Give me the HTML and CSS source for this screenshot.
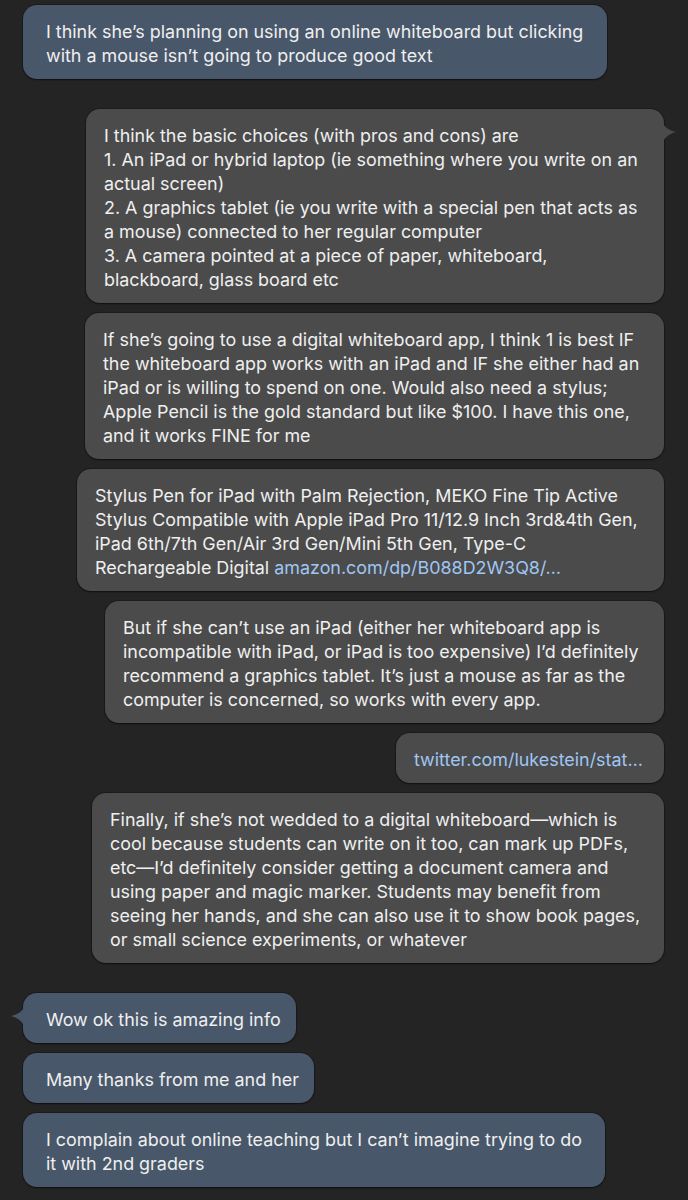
FILE: index.html
```html
<!DOCTYPE html>
<html lang="en">
<head>
<meta charset="utf-8">
<title>Messages</title>
<link rel="stylesheet" href="styles.css">
</head>
<body>
<main class="thread">
  <div class="bubble in w1 first">I think she’s planning on using an online whiteboard but clicking<br>with a mouse isn’t going to produce good text</div>

  <div class="group">
    <div class="bubble out w2 tailed">I think the basic choices (with pros and cons) are<br>1. An iPad or hybrid laptop (ie something where you write on an<br>actual screen)<br>2. A graphics tablet (ie you write with a special pen that acts as<br>a mouse) connected to her regular computer<br>3. A camera pointed at a piece of paper, whiteboard,<br>blackboard, glass board etc<svg class="tail tail-right" width="16" height="26" viewBox="0 0 16 26"><path d="M0 0 C2 6 6 9 14 11 C6 13 2 17 0 24 Z"/></svg></div>
    <div class="bubble out w3">If she’s going to use a digital whiteboard app, I think 1 is best IF<br>the whiteboard app works with an iPad and IF she either had an<br>iPad or is willing to spend on one. Would also need a stylus;<br>Apple Pencil is the gold standard but like $100. I have this one,<br>and it works FINE for me</div>
    <div class="bubble out w4">Stylus Pen for iPad with Palm Rejection, MEKO Fine Tip Active<br>Stylus Compatible with Apple iPad Pro 11/12.9 Inch 3rd&amp;4th Gen,<br>iPad 6th/7th Gen/Air 3rd Gen/Mini 5th Gen, Type-C<br>Rechargeable Digital <span class="link">amazon.com/dp/B088D2W3Q8/…</span></div>
    <div class="bubble out w5">But if she can’t use an iPad (either her whiteboard app is<br>incompatible with iPad, or iPad is too expensive) I’d definitely<br>recommend a graphics tablet. It’s just a mouse as far as the<br>computer is concerned, so works with every app.</div>
    <div class="bubble out w6"><span class="link">twitter.com/lukestein/stat…</span></div>
    <div class="bubble out w7">Finally, if she’s not wedded to a digital whiteboard—which is<br>cool because students can write on it too, can mark up PDFs,<br>etc—I’d definitely consider getting a document camera and<br>using paper and magic marker. Students may benefit from<br>seeing her hands, and she can also use it to show book pages,<br>or small science experiments, or whatever</div>
  </div>

  <div class="group">
    <div class="bubble in w8 tailed">Wow ok this is amazing info<svg class="tail tail-left" width="16" height="26" viewBox="0 0 16 26"><path d="M16 0 C14 6 10 9 2 11 C10 13 14 17 16 24 Z"/></svg></div>
    <div class="bubble in w9">Many thanks from me and her</div>
    <div class="bubble in w10">I complain about online teaching but I can’t imagine trying to do<br>it with 2nd graders</div>
  </div>
</main>
</body>
</html>
```
FILE: styles.css
```css
html, body {
  margin: 0;
  padding: 0;
  background: #242424;
}

body {
  width: 688px;
  height: 1200px;
  overflow: hidden;
  font-family: Inter, "Noto Sans", sans-serif;
  font-size: 17.9px;
  line-height: 24px;
  color: #efefef;
}

.thread {
  display: flex;
  flex-direction: column;
  gap: 30px;
  padding-top: 5px;
}

.group {
  display: flex;
  flex-direction: column;
  gap: 10px;
}

.bubble {
  position: relative;
  box-sizing: border-box;
  padding: 15px 18px 11px;
  border-radius: 14px;
  white-space: nowrap;
  box-shadow: 0 0 0 1px rgba(0, 0, 0, 0.22), 0 1px 2px rgba(0, 0, 0, 0.45);
}

.bubble.in {
  align-self: flex-start;
  margin-left: 23px;
  padding-left: 23px;
  background: #48576a;
  fill: #48576a;
}

.bubble.out {
  align-self: flex-end;
  margin-right: 24px;
  background: #4b4b4b;
  fill: #4b4b4b;
}

.link {
  color: #9fc6f2;
}

.tail {
  position: absolute;
  top: 12px;
}

.tail-right {
  right: -14px;
}

.tail-left {
  left: -14px;
}

.w1 { width: 584px; }
.w2 { width: 578px; }
.w3 { width: 579px; }
.w4 { width: 587px; }
.w5 { width: 559px; }
.w6 { width: 268px; }
.w7 { width: 572px; }
.w8 { width: 273px; }
.w9 { width: 291px; }
.w10 { width: 582px; }
```
